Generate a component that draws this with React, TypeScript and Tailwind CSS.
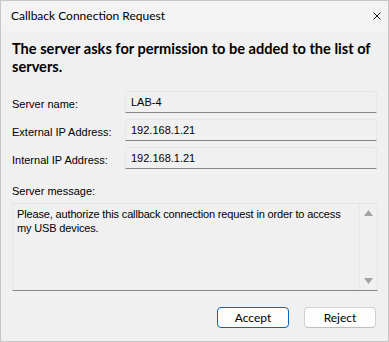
import React from 'react';

const uiFont = { fontFamily: 'Lato, "Liberation Sans", sans-serif' };
const dlgFont = { fontFamily: '"Liberation Sans", Arial, sans-serif' };

function Field({ label, value }: { label: string; value: string }) {
  return (
    <div className="flex items-center">
      <span className="w-[113px] shrink-0 text-[11px] leading-[14px] pt-[4px]" style={dlgFont}>
        {label}
      </span>
      <div
        className="h-[22px] w-[253px] border border-[#e6e6e6] border-b-[#868686] bg-[#f0f0f0] rounded-t-[3px] pl-[5px] pt-[4px] text-[11px] leading-[13px]"
        style={dlgFont}
      >
        {value}
      </div>
    </div>
  );
}

export default function App() {
  return (
    <div
      className="w-[389px] h-[342px] border border-[#c6c6c6] bg-[#f0f0f0] text-black flex flex-col"
      style={uiFont}
    >
      {/* Title bar */}
      <div className="h-[30px] bg-[#f3f3f3] flex items-center justify-between pl-[10px] pr-[7px]">
        <span className="text-[12px] leading-[16px]">Callback Connection Request</span>
        <svg width="8" height="8" viewBox="0 0 8 8">
          <path d="M0.5 0.5 L7.5 7.5 M7.5 0.5 L0.5 7.5" stroke="#1a1a1a" strokeWidth="1" />
        </svg>
      </div>

      {/* Body */}
      <div className="flex-1 flex flex-col px-[11px] pt-[9px]">
        <h1 className="text-[14.6px] leading-[18px] font-bold">
          The server asks for permission to be added to the list of servers.
        </h1>

        <div className="mt-[15px] flex flex-col gap-[6px]">
          <Field label="Server name:" value="LAB-4" />
          <Field label="External IP Address:" value="192.168.1.21" />
          <Field label="Internal IP Address:" value="192.168.1.21" />
        </div>

        <div className="mt-[15px] text-[11px] leading-[14px]" style={dlgFont}>
          Server message:
        </div>

        <div className="mt-[5px] h-[88px] w-[366px] border border-[#e6e6e6] border-b-[#868686] flex">
          <div
            className="flex-1 pl-[4px] pr-[2px] pt-[3px] text-[11px] leading-[14px] tracking-[-0.15px]"
            style={dlgFont}
          >
            Please, authorize this callback connection request in order to access my USB devices.
          </div>
          <div className="w-[18px] border-l border-[#e6e6e6] flex flex-col items-center justify-between py-[6px]">
            <svg width="9" height="6" viewBox="0 0 9 6">
              <path d="M4.5 0 L9 6 L0 6 Z" fill="#a3a3a3" />
            </svg>
            <svg width="9" height="6" viewBox="0 0 9 6">
              <path d="M0 0 L9 0 L4.5 6 Z" fill="#a3a3a3" />
            </svg>
          </div>
        </div>

        <div className="mt-[16px] flex justify-end gap-[15px] pr-[1px]">
          <button className="w-[72px] h-[21px] rounded-[4px] border border-[#0067c0] bg-[#fdfdfd] text-[12px] leading-[16px]">
            Accept
          </button>
          <button className="w-[72px] h-[21px] rounded-[4px] border border-[#d0d0d0] border-b-[#bdbdbd] bg-[#fdfdfd] text-[12px] leading-[16px]">
            Reject
          </button>
        </div>
      </div>
    </div>
  );
}
